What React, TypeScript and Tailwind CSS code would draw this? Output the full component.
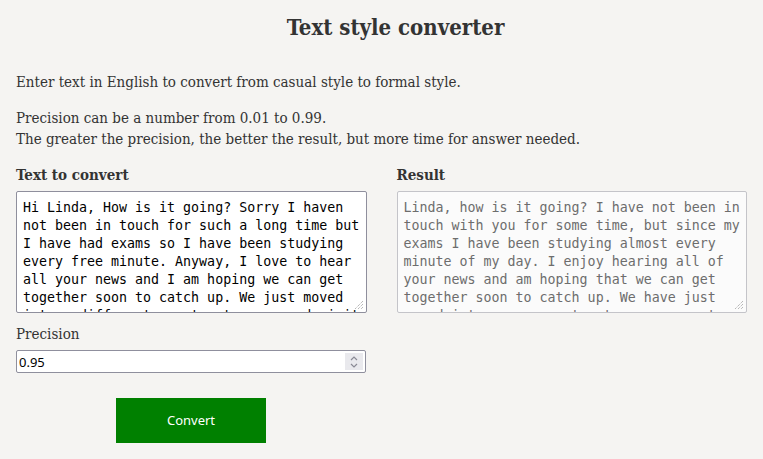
import { useState } from "react";

const serif = "font-['DejaVu_Serif',serif] font-stretch-condensed";
const mono = "font-['DejaVu_Sans_Mono',monospace]";

const source =
  "Hi Linda, How is it going? Sorry I haven not been in touch for such a long time but I have had exams so I have been studying every free minute. Anyway, I love to hear all your news and I am hoping we can get together soon to catch up. We just moved into a different apartment, come and visit soon!";

const result =
  "Linda, how is it going? I have not been in touch with you for some time, but since my exams I have been studying almost every minute of my day. I enjoy hearing all of your news and am hoping that we can get together soon to catch up. We have just moved into a new apartment, so you must come to visit us.";

const Grip = () => (
  <svg className="pointer-events-none absolute bottom-[3px] right-[3px]" width="10" height="10" viewBox="0 0 10 10">
    <path d="M9 1L1 9M9 4L4 9M9 7L7 9" stroke="#9a9a9a" strokeWidth="1" strokeDasharray="1 1" />
  </svg>
);

export default function App() {
  const [text, setText] = useState(source);
  const [precision, setPrecision] = useState("0.95");

  return (
    <div className={`min-h-screen bg-[#f5f4f2] px-4 pt-[13px] text-[#333] ${serif}`}>
      <h1 className="pl-[28px] text-center text-[22px] font-bold leading-[28px]">Text style converter</h1>

      <p className="mt-[31px] text-[15px] leading-[21px]">
        Enter text in English to convert from casual style to formal style.
      </p>
      <p className="mt-[15px] text-[15px] leading-[21px]">
        Precision can be a number from 0.01 to 0.99.
        <br />
        The greater the precision, the better the result, but more time for answer needed.
      </p>

      <div className="mt-[15px] grid grid-cols-2 gap-[30px]">
        <div>
          <label className="block text-[15px] font-bold leading-[21px]">Text to convert</label>
          <div className="relative mt-[5px]">
            <textarea
              value={text}
              onChange={e => setText(e.target.value)}
              className={`block h-[122px] w-full resize-none overflow-hidden rounded-[2px] border border-[#8f8f9d] bg-white pt-[7px] pb-[6px] pl-[6px] pr-[2px] text-[13.3px] leading-[18px] text-black outline-none ${mono}`}
            />
            <Grip />
          </div>
        </div>
        <div>
          <label className="block text-[15px] font-bold leading-[21px]">Result</label>
          <div className="relative mt-[5px]">
            <textarea
              readOnly
              value={result}
              className={`block h-[122px] w-full resize-none overflow-hidden rounded-[2px] border border-[#c4c4c9] bg-[#fbfbfb] pt-[7px] pb-[6px] pl-[6px] pr-[2px] text-[13.3px] leading-[18px] text-[#6d6d6d] outline-none ${mono}`}
            />
            <Grip />
          </div>
        </div>
      </div>

      <div className="mt-[11px] w-[350px]">
        <label className="block text-[15px] leading-[21px]">Precision</label>
        <div className="relative mt-[5px]">
          <input
            type="text"
            value={precision}
            onChange={e => setPrecision(e.target.value)}
            className="block h-[23px] w-full rounded-[2px] border border-[#8f8f9d] bg-white pl-[2px] pr-6 font-['Noto_Sans',sans-serif] text-[13px] text-black outline-none"
          />
          <div className="pointer-events-none absolute right-[3px] top-[3px] flex h-[17px] w-[18px] flex-col items-center justify-center bg-[#e9e9ed]">
            <svg width="10" height="14" viewBox="0 0 10 14" fill="none" stroke="#8a8a95" strokeWidth="1.2">
              <path d="M2 5L5 2L8 5" />
              <path d="M2 9L5 12L8 9" />
            </svg>
          </div>
        </div>
      </div>

      <button className="ml-[100px] mt-[25px] h-[45px] w-[150px] bg-[#008000] font-['Noto_Sans',sans-serif] text-[13px] text-white">
        Convert
      </button>
    </div>
  );
}
